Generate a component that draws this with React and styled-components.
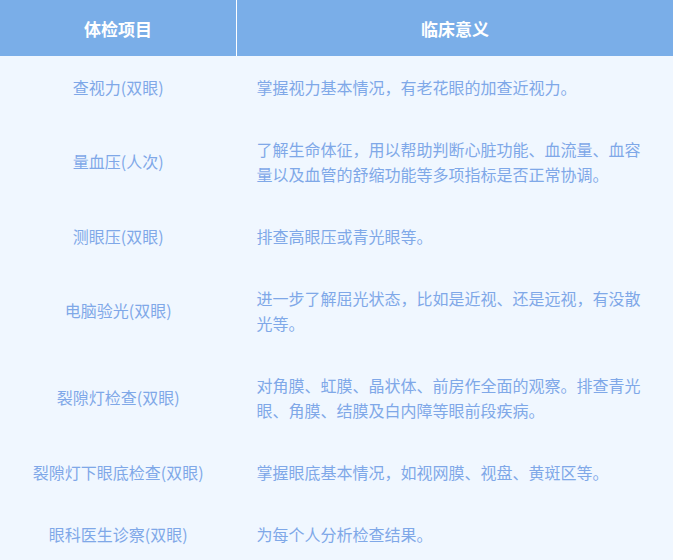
import React from 'react';
import styled, { createGlobalStyle } from 'styled-components';

const GlobalStyle = createGlobalStyle`
  html, body {
    margin: 0;
    padding: 0;
    background: #f0f7ff;
  }
  body {
    font-family: "Noto Sans CJK SC", "Noto Sans", sans-serif;
  }
`;

const Table = styled.table`
  width: 673px;
  border-collapse: collapse;
  table-layout: fixed;
  background: #f0f7ff;
`;

const HeadCell = styled.th`
  height: 56px;
  padding: 0;
  background: #7aaee8;
  color: #fff;
  font-size: 17px;
  font-weight: bold;
  text-align: center;
  border-right: ${(p) => (p.$divider ? '1px solid #fff' : 'none')};
  width: ${(p) => (p.$divider ? '236px' : 'auto')};
`;

const Cell = styled.td`
  padding: 18.5px 20px;
  font-size: 16px;
  line-height: 25px;
  color: #7fa8e8;
  text-align: ${(p) => (p.$center ? 'center' : 'left')};
  vertical-align: middle;
`;

const rows = [
  ['查视力(双眼)', '掌握视力基本情况，有老花眼的加查近视力。'],
  ['量血压(人次)', '了解生命体征，用以帮助判断心脏功能、血流量、血容量以及血管的舒缩功能等多项指标是否正常协调。'],
  ['测眼压(双眼)', '排查高眼压或青光眼等。'],
  ['电脑验光(双眼)', '进一步了解屈光状态，比如是近视、还是远视，有没散光等。'],
  ['裂隙灯检查(双眼)', '对角膜、虹膜、晶状体、前房作全面的观察。排查青光眼、角膜、结膜及白内障等眼前段疾病。'],
  ['裂隙灯下眼底检查(双眼)', '掌握眼底基本情况，如视网膜、视盘、黄斑区等。'],
  ['眼科医生诊察(双眼)', '为每个人分析检查结果。'],
];

export default function App() {
  return (
    <>
      <GlobalStyle />
      <Table>
        <thead>
          <tr>
            <HeadCell $divider>体检项目</HeadCell>
            <HeadCell>临床意义</HeadCell>
          </tr>
        </thead>
        <tbody>
          {rows.map(([item, meaning], i) => (
            <tr key={i}>
              <Cell $center>{item}</Cell>
              <Cell>{meaning}</Cell>
            </tr>
          ))}
        </tbody>
      </Table>
    </>
  );
}
